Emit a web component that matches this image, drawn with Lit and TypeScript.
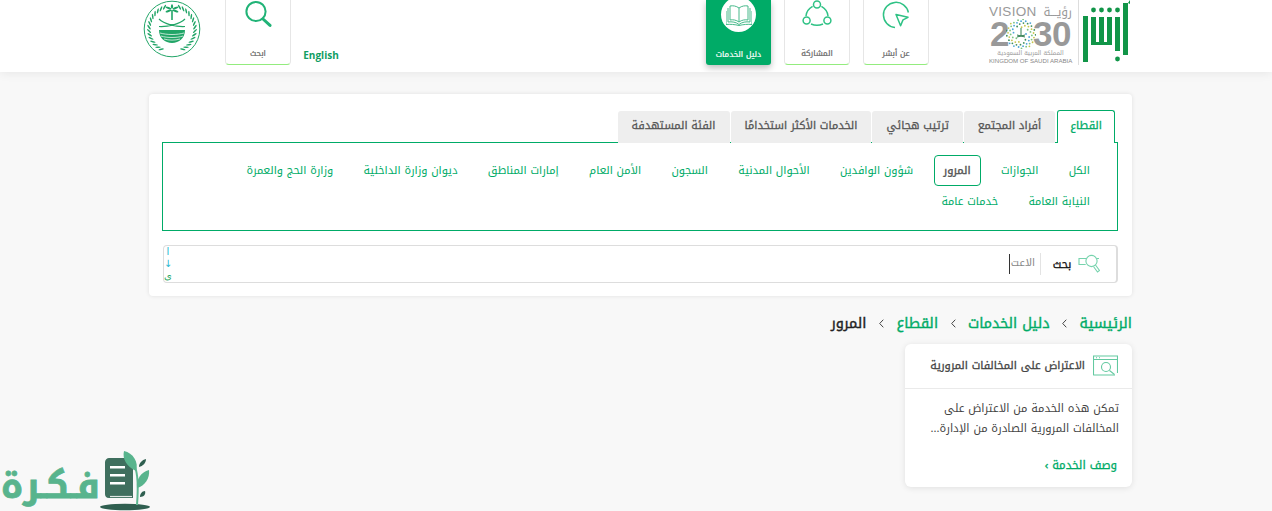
import { LitElement, html, css, svg } from "lit";
import { customElement } from "lit/decorators.js";

const tabs = ["القطاع", "أفراد المجتمع", "ترتيب هجائي", "الخدمات الأكثر استخدامًا", "الفئة المستهدفة"];
const row1 = ["الكل", "الجوازات", "المرور", "شؤون الوافدين", "الأحوال المدنية", "السجون", "الأمن العام", "إمارات المناطق", "ديوان وزارة الداخلية", "وزارة الحج والعمرة"];
const row2 = ["النيابة العامة", "خدمات عامة"];

const absher = svg`<svg width="48" height="64" viewBox="0 0 48 64" fill="#119548">
  <rect x="1" y="16" width="5" height="46"/><rect x="9" y="17" width="5" height="28"/><rect x="17" y="17" width="5" height="28"/><rect x="25" y="17" width="5" height="28"/><rect x="33" y="17" width="5" height="34"/><rect x="41" y="3" width="5" height="52"/>
  <path d="M46 3l2-3v4z"/>
  <path d="M1 57h5v5H1zM9 42h21v3H9z"/>
  <circle cx="11.500" cy="10" r="2.400"/><circle cx="19.500" cy="10" r="2.400"/><circle cx="27.500" cy="10" r="2.400"/><circle cx="35.500" cy="10" r="2.400"/><circle cx="35.500" cy="59" r="2.400"/>
</svg>`;

const sunburst = svg`<svg class="sun" width="30" height="30" viewBox="0 0 30 30">
  ${Array.from({ length: 60 }).map((_, i) => {
    const a = i * 2.4;
    const r = 5 + Math.sqrt(i) * 1.3;
    return svg`<circle cx="${15 + r * Math.cos(a)}" cy="${15 + r * Math.sin(a)}" r=".9" fill="${["#4aa3d8", "#7bc47f", "#c8c64a", "#3f8f5b"][i % 4]}"/>`;
  })}
  <path d="M15 9v8M11 18l8-2M19 18l-8-2" stroke="#2f7d4f" stroke-width="1"/>
</svg>`;

const wreathLeaves = Array.from({ length: 15 }).flatMap((_, i) => {
  const deg = 118 + i * 9.500;
  const a = (deg * Math.PI) / 180;
  const x = 23 * Math.cos(a);
  const y = 23 * Math.sin(a);
  const rot = deg + 50;
  return [
    svg`<ellipse cx="${29 + x}" cy="${29 + y}" rx="2.800" ry=".8" transform="rotate(${rot} ${29 + x} ${29 + y})"/>`,
    svg`<ellipse cx="${29 - x}" cy="${29 + y}" rx="2.800" ry=".8" transform="rotate(${-rot} ${29 - x} ${29 + y})"/>`,
  ];
});

const emblem = svg`<svg width="58" height="58" viewBox="0 0 58 58" fill="none" stroke="#21a567">
  <circle cx="29" cy="29" r="27.800" stroke-width="1"/>
  <g fill="#21a567" stroke="none">${wreathLeaves}</g>
  <path d="M29 10v10" stroke-width="1.600"/>
  <g fill="#21a567" stroke="none">
    <ellipse cx="25.500" cy="8" rx="3" ry="1" transform="rotate(20 25.500 8)"/><ellipse cx="32.500" cy="8" rx="3" ry="1" transform="rotate(-20 32.500 8)"/>
    <ellipse cx="25.500" cy="11" rx="3.200" ry="1" transform="rotate(-20 25.500 11)"/><ellipse cx="32.500" cy="11" rx="3.200" ry="1" transform="rotate(20 32.500 11)"/>
    <ellipse cx="29" cy="6.500" rx="1.100" ry="2.200"/>
  </g>
  <path d="M16 19c5 5 17 8 26 7.500M42 19c-5 5-17 8-26 7.500" stroke-width="1.200"/>
  <path d="M16 30h26c0 8-6 13-13 13s-13-5-13-13z" fill="#21a567" stroke="none"/>
  <path d="M17 33c7 2 17 2 24 0M18 36c6 2 16 2 22 0M21 39c5 1.500 11 1.500 16 0" stroke="#fff" stroke-width=".7"/>
</svg>`;

const searchIcon = svg`<svg width="28" height="28" viewBox="0 0 28 28" fill="none" stroke="#21b377" stroke-width="2"><circle cx="12" cy="11.500" r="9.600"/><path d="M19 19l7 6.400" stroke-width="3" stroke-linecap="round"/></svg>`;
const playIcon = svg`<svg width="30" height="30" viewBox="0 0 30 30" fill="none" stroke="#2fc285" stroke-width="1.500"><path d="M14 27.500A12.600 12.600 0 1 1 27.400 12.500"/><path d="M15 14.500l12 2.800-5 2.600-2.400 5.800z" stroke-linejoin="round"/></svg>`;
const shareIcon = svg`<svg width="30" height="30" viewBox="0 0 30 30" fill="none" stroke="#2fc285" stroke-width="1.500"><circle cx="15" cy="4.500" r="3.500"/><circle cx="4.600" cy="20.500" r="3.500"/><circle cx="25.400" cy="20.500" r="3.500"/><path d="M10.600 6.400C6.600 8.600 4.400 12 4 16M19.400 6.400c4 2.200 6.200 5.600 6.600 9.600M9 24c4 1.800 8 1.800 12 0"/></svg>`;
const bookIcon = svg`<svg width="26" height="22" viewBox="0 0 26 22" fill="none" stroke="#46b98a" stroke-width="1"><path d="M13 4C10 1.800 7 1.500 4 2v14c3-.5 6-.2 9 2 3-2.200 6-2.500 9-2V2c-3-.5-6-.2-9 2zM13 4v14"/><path d="M2 4v14c4-.5 8 0 11 2.500C16 18 20 17.500 24 18V4M0 7v13.500c4-.5 9 0 13 1 4-1 9-1.500 13-1V7"/></svg>`;
const findIcon = svg`<svg class="fi" width="22" height="22" viewBox="0 0 22 22" fill="none" stroke="#76d3ad" stroke-width="1.100"><circle cx="13.500" cy="8" r="5.600"/><path d="M17.500 12l4 5.500-2 1.500-4-5.500M8.200 5.500H1v6h6.700M19 5.500h2"/></svg>`;
const cardIcon = svg`<svg class="ci" width="25" height="21" viewBox="0 0 25 21" fill="none" stroke="#63c9a0" stroke-width="1.100"><path d="M22 20H1a.5.5 0 0 1-.5-.5V1h24v17"/><path d="M.5 4.500h24M3 2.800h1M6 2.800h1" /><circle cx="13" cy="12" r="4.500"/><path d="M16.500 15.500l5 4"/></svg>`;

const fikra = svg`<svg width="52" height="62" viewBox="0 0 52 62">
  <ellipse cx="25" cy="58" rx="25" ry="3.200" fill="#2f5f50"/>
  <path d="M9 9h16l8 8v32H9c-3 0-4-2-4-4V13c0-2 2-4 4-4z" fill="#3f6f5e"/>
  <path d="M10 17h15v2.600H10zM10 25h15v2.600H10zM10 33h15v2.600H10z" fill="#fff"/>
  <path d="M10 47.500h22" stroke="#dfe8e4" stroke-width="1.200"/>
  <path d="M37 56c1-13 2-28-2-38" stroke="#5db891" stroke-width="2" fill="none"/>
  <path d="M36 22C27 18 22 10 24 2c9 2 15 11 12 20z" fill="#58b48d"/>
  <path d="M37 39c-1-9 4-16 12-18 1 8-4 16-12 18z" fill="#58b48d"/>
  <path d="M39 18c0-4 3-7 7-8 0 4-3 7-7 8zM40 48c0-3 2-6 5-6 1 3-1 6-5 6z" fill="#2f5f50"/>
</svg>`;

const chev = svg`<svg width="5" height="9" viewBox="0 0 5 9" fill="none" stroke="#444" stroke-width="1"><path d="M.7.7l3.600 3.800L.7 8.300"/></svg>`;

@customElement("app-root")
export class AppRoot extends LitElement {
  static styles = css`
    :host { display: block; position: relative; height: 511px; overflow: hidden; background: #f8f8f8; font-family: "Noto Kufi Arabic", "DejaVu Sans", sans-serif; font-size: 11px; }
    * { box-sizing: border-box; }
    .header { height: 72px; background: #fff; box-shadow: 0 1px 10px rgba(0,0,0,.08); display: flex; justify-content: space-between; padding: 0 142px 0 143px; direction: rtl; overflow: hidden; }
    .group { display: flex; align-items: flex-start; }
    .absher { padding-left: 4px; border-left: 1px solid #ddd; height: 65px; margin-left: 6px; flex: none; width: 52px; }
    .vision { width: 83px; margin-left: 60px; direction: ltr; color: #999; padding-top: 5px; display: flex; flex-direction: column; flex: none; }
    .v1 { display: flex; justify-content: space-between; font: 13.500px/14px "Liberation Sans", sans-serif; height: 14px; letter-spacing: .3px; }
    .v1 .ar { font: 12px/14px "Noto Kufi Arabic", sans-serif; letter-spacing: 0; direction: rtl; }
    .v2 { display: flex; align-items: center; justify-content: center; font: 700 35px/27px "Liberation Sans", sans-serif; height: 27px; margin-top: 1px; letter-spacing: -.5px; }
    .sun { margin: 0 -3px; flex: none; }
    .v3 { font-size: 6px; line-height: 8px; text-align: center; direction: rtl; margin-top: 2px; white-space: nowrap; }
    .v4 { font: 6.100px/7px "Liberation Sans", sans-serif; white-space: nowrap; color: #888; text-align: center; }
    .tile { width: 66px; height: 65px; background: #fff; border: 1px solid #e6e6e6; border-top: 0; border-bottom: 1px solid #93ec7e; border-radius: 0 0 4px 4px; margin-left: 13px; display: flex; flex-direction: column; align-items: center; position: relative; color: #666; font-size: 8px; -webkit-text-stroke: .2px currentColor; }
    .tile span { position: absolute; bottom: 3px; left: 0; right: 0; text-align: center; white-space: nowrap; }
    .tile.on { width: 65px; background: #00ab67; border: 0; color: #fff; box-shadow: 0 3px 6px rgba(0,0,0,.25); border-radius: 0 0 3px 3px; }
    .tile.last { margin-left: 0; }
    .circle { width: 35px; height: 35px; border-radius: 50%; background: #fff; margin-top: -3px; display: flex; align-items: center; justify-content: center; }
    .english { font: 700 10px/12px "Open Sans", sans-serif; color: #0f9d63; margin-top: 49px; width: 60px; text-align: center; direction: ltr; }
    .emblem { margin-right: 24px; }
    .card { margin: 22px 140px 0 149px; height: 202px; background: #fff; border-radius: 4px; box-shadow: 0 0 4px rgba(0,0,0,.1); padding: 16px 14px 0 13px; direction: rtl; }
    .tabs { display: flex; gap: 1px; padding-right: 3px; height: 32px; }
    .tab { height: 32px; padding: 0 14px; background: #eee; color: #555; -webkit-text-stroke: .3px currentColor; line-height: 29px; border-radius: 3px 3px 0 0; white-space: nowrap; margin-top: 1px; }
    .tab.on { padding: 0 12px; background: #fff; color: #00ab67; border: 1px solid #00ab67; border-bottom: 0; margin-top: 0; height: 33px; position: relative; z-index: 1; margin-left: 1px; }
    .panel { height: 89px; border: 1px solid #00ab67; padding: 12px 12px 0 8px; }
    .row { display: flex; height: 31px; }
    .pill { padding: 0 9px; margin: 0 5.150px; line-height: 29px; height: 31px; border: 1px solid transparent; border-radius: 4px; color: #00ab67; white-space: nowrap; }
    .pill.on { border-color: #00ab67; color: #555; -webkit-text-stroke: .4px currentColor; }
    .search { margin-top: 14px; height: 38px; width: 955px; border: 1px solid #ddd; border-right-width: 2px; border-radius: 4px; display: flex; align-items: center; padding-right: 16px; position: relative; }
    .fi { flex: none; }
    .search .lab { -webkit-text-stroke: .3px currentColor; color: #111; margin-right: 5px; width: 22px; text-align: center; }
    .search .sep { width: 1px; height: 22px; background: #e3e3e3; margin: 0 10px 0 5px; }
    .ph { color: #888; font-size: 10.500px; border-left: 1px solid #333; height: 20px; line-height: 17px; width: 26px; white-space: nowrap; overflow: hidden; }
    .side { position: absolute; left: -1px; top: 0; width: 10px; height: 36px; display: flex; flex-direction: column; align-items: center; justify-content: space-between; font: 10px/12px "DejaVu Sans", sans-serif; color: #1fb6d0; }
    .side b { color: #26a65b; font-weight: 400; }
    .crumb { margin: 18px 140px 0 0; direction: rtl; display: flex; align-items: center; gap: 12.500px; font-size: 14.400px; -webkit-text-stroke: .4px currentColor; color: #00ab67; height: 18px; white-space: nowrap; }
    .crumb .c { flex: none; display: block; }
    .crumb .c svg { display: block; transform: scaleX(-1); }
    .crumb .cur { color: #222; }
    .svc { margin: 12px 140px 0 0; margin-left: auto; width: 227px; height: 143px; background: #fff; border-radius: 6px; box-shadow: 0 1px 6px rgba(0,0,0,.1); direction: rtl; }
    .svc-h { height: 45px; border-bottom: 1px solid #eaeaea; display: flex; align-items: center; padding: 0 14px 2px; gap: 8px; -webkit-text-stroke: .3px currentColor; font-size: 11px; color: #444; white-space: nowrap; }
    .ci { flex: none; }
    .svc-b { padding: 10px 13px 0; line-height: 20px; color: #444; font-size: 11.200px; height: 65px; white-space: nowrap; }
    .svc-l { padding: 0 15px; color: #00ab67; -webkit-text-stroke: .3px currentColor; font-size: 11.500px; }
    .fikra { position: absolute; left: 0; bottom: 0; display: flex; align-items: flex-end; }
    .fikra span { font: 700 36px/50px "Noto Kufi Arabic", sans-serif; -webkit-text-stroke: .8px currentColor; color: #58b48d; direction: rtl; width: 100px; white-space: nowrap; }
  `;

  render() {
    return html`
      <div class="header">
        <div class="group">
          <div class="absher">${absher}</div>
          <div class="vision">
            <div class="v1"><span>VISION</span><span class="ar">رؤيـــة</span></div>
            <div class="v2">2${sunburst}30</div>
            <div class="v3">المملكة العربية السعودية</div>
            <div class="v4">KINGDOM OF SAUDI ARABIA</div>
          </div>
          <div class="tile">${playIcon}<span>عن أبشر</span></div>
          <div class="tile">${shareIcon}<span>المشاركة</span></div>
          <div class="tile on last"><div class="circle">${bookIcon}</div><span>دليل الخدمات</span></div>
        </div>
        <div class="group">
          <div class="english">English</div>
          <div class="tile last">${searchIcon}<span>ابحث</span></div>
          <div class="emblem">${emblem}</div>
        </div>
      </div>
      <div class="card">
        <div class="tabs">
          ${tabs.map((t, i) => html`<div class="tab ${i === 0 ? "on" : ""}">${t}</div>`)}
        </div>
        <div class="panel">
          <div class="row">${row1.map((t) => html`<div class="pill ${t === "المرور" ? "on" : ""}">${t}</div>`)}</div>
          <div class="row">${row2.map((t) => html`<div class="pill">${t}</div>`)}</div>
        </div>
        <div class="search">
          ${findIcon}
          <div class="lab">بحث</div>
          <div class="sep"></div>
          <div class="ph">الاعت</div>
          <div class="side"><span>ا</span><span>↓</span><b>ى</b></div>
        </div>
      </div>
      <div class="crumb">
        <span>الرئيسية</span><span class="c">${chev}</span><span>دليل الخدمات</span><span class="c">${chev}</span><span>القطاع</span><span class="c">${chev}</span><span class="cur">المرور</span>
      </div>
      <div class="svc">
        <div class="svc-h">${cardIcon}<span>الاعتراض على المخالفات المرورية</span></div>
        <div class="svc-b">تمكن هذه الخدمة من الاعتراض على<br />المخالفات المرورية الصادرة من الإدارة...</div>
        <div class="svc-l">وصف الخدمة ›</div>
      </div>
      <div class="fikra"><span>فـكـرة</span>${fikra}</div>
    `;
  }
}
